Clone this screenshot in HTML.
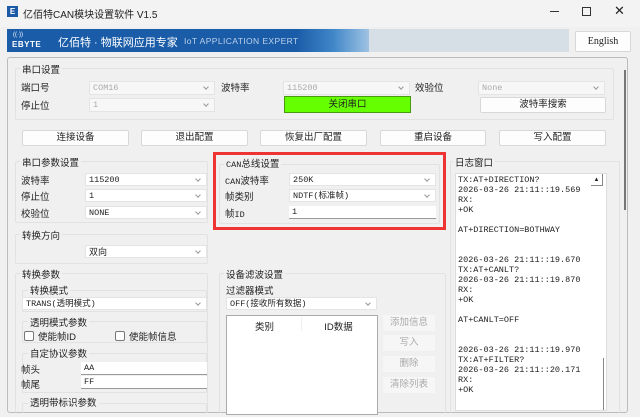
<!DOCTYPE html>
<html><head><meta charset="utf-8"><style>
*{box-sizing:border-box;margin:0;padding:0}
body{width:640px;height:417px;background:#f0f0f0;font-family:"Liberation Sans","Noto Sans CJK SC",sans-serif;font-size:9.5px;color:#222;position:relative;overflow:hidden}
.a{position:absolute;white-space:nowrap}
.m{font-family:"Liberation Mono","Noto Sans CJK SC",monospace;font-size:8.5px}
.cb{position:absolute;background:#fff;border:1px solid #e4e4e4;font-family:"Liberation Mono","Noto Sans CJK SC",monospace;font-size:8.5px;padding-left:3px;line-height:12px;white-space:nowrap}
.cb.d{background:#f7f7f7;color:#aaa}
.cb:after{content:"";position:absolute;right:6px;top:3px;width:3px;height:3px;border-right:1px solid #999;border-bottom:1px solid #999;transform:rotate(45deg)}
.ed{position:absolute;background:#fff;border-bottom:1px solid #999;font-family:"Liberation Mono",monospace;font-size:8.5px;padding-left:3px;line-height:12px}
.bt{position:absolute;background:#fdfdfd;border:1px solid #d8d8d8;border-radius:2px;text-align:center;line-height:14px;font-size:9.5px}
.gb{position:absolute;border:1px solid #e2e2e2;border-radius:2px}
.gt{position:absolute;background:#f0f0f0;padding:0 2px;font-size:9.5px}
.dis{position:absolute;background:#f6f6f6;color:#aaa;text-align:center;line-height:16px;font-size:9.5px}
.ck{display:inline-block;width:10px;height:10px;border:1px solid #777;border-radius:2px;vertical-align:-1px;margin-right:4px;background:#fff}
</style></head><body>
<!-- title bar -->
<div class="a" style="left:0;top:0;width:640px;height:27px;background:#f3f3f3"></div>
<div class="a" style="left:7px;top:6px;width:11px;height:11px;background:#1c5aa6;color:#fff;font-size:8px;line-height:11px;text-align:center;font-weight:bold">E</div>
<div class="a" style="left:23px;top:6px;font-size:10px">亿佰特CAN模块设置软件 V1.5</div>
<div class="a" style="left:550px;top:11px;width:9px;height:1px;background:#333"></div>
<div class="a" style="left:582px;top:7px;width:9px;height:9px;border:1px solid #333"></div>
<div class="a" style="left:614px;top:3px;font-size:13px">✕</div>
<!-- banner -->
<div class="a" style="left:7px;top:29px;width:562px;height:23px;background:#d6dee6"></div>
<div class="a" style="left:7px;top:29px;width:362px;height:23px;background:linear-gradient(90deg,#1b5ca8 0%,#1b5ca8 80%,#3f86c8 90%,#9fc3e3 100%)"></div>
<div class="a" style="left:13px;top:32px;color:#fff;font-size:6px">((·))</div>
<div class="a" style="left:12px;top:40px;color:#fff;font-size:8px;font-weight:bold;letter-spacing:0.5px">EBYTE</div>
<div class="a" style="left:58px;top:34px;color:#fff;font-size:11px">亿佰特 · 物联网应用专家</div>
<div class="a" style="left:184px;top:36px;color:#bcd2ea;font-size:8.5px;letter-spacing:0.4px">IoT APPLICATION EXPERT</div>
<div class="bt" style="left:575px;top:31px;width:56px;height:21px;line-height:19px;font-family:'Liberation Serif',serif;font-size:10px">English</div>
<!-- main panel -->
<div class="a" style="left:7px;top:57px;width:621px;height:356px;border:1px solid #bbb;border-radius:3px"></div>
<div class="a" style="left:624px;top:70px;width:2px;height:140px;background:#777"></div>
<!-- 串口设置 -->
<div class="gb" style="left:15px;top:68px;width:599px;height:52px"></div>
<div class="gt" style="left:20px;top:62px">串口设置</div>
<div class="a" style="left:21px;top:80px">端口号</div>
<div class="a" style="left:21px;top:98px">停止位</div>
<div class="cb d" style="left:89px;top:81px;width:126px;height:14px">COM16</div>
<div class="cb d" style="left:89px;top:98px;width:126px;height:14px">1</div>
<div class="a" style="left:221px;top:80px">波特率</div>
<div class="cb d" style="left:283px;top:81px;width:127px;height:14px">115200</div>
<div class="a" style="left:415px;top:80px">效验位</div>
<div class="cb d" style="left:478px;top:81px;width:127px;height:14px">None</div>
<div class="a" style="left:284px;top:96px;width:127px;height:17px;background:#66ff00;border:1px solid #4a9a10;text-align:center;line-height:15px">关闭串口</div>
<div class="bt" style="left:480px;top:97px;width:126px;height:16px">波特率搜索</div>
<!-- buttons row -->
<div class="bt" style="left:22px;top:130px;width:107px;height:16px">连接设备</div>
<div class="bt" style="left:141px;top:130px;width:107px;height:16px">退出配置</div>
<div class="bt" style="left:260px;top:130px;width:107px;height:16px">恢复出厂配置</div>
<div class="bt" style="left:380px;top:130px;width:106px;height:16px">重启设备</div>
<div class="bt" style="left:499px;top:130px;width:107px;height:16px">写入配置</div>
<!-- 串口参数设置 -->
<div class="gb" style="left:15px;top:161px;width:193px;height:62px"></div>
<div class="gt" style="left:20px;top:155px">串口参数设置</div>
<div class="a" style="left:21px;top:173px">波特率</div>
<div class="a" style="left:21px;top:189px">停止位</div>
<div class="a" style="left:21px;top:206px">校验位</div>
<div class="cb" style="left:85px;top:173px;width:122px;height:13px">115200</div>
<div class="cb" style="left:85px;top:189px;width:122px;height:13px">1</div>
<div class="cb" style="left:85px;top:206px;width:122px;height:13px">NONE</div>
<div class="gb" style="left:15px;top:234px;width:193px;height:30px"></div>
<div class="gt" style="left:20px;top:228px">转换方向</div>
<div class="cb" style="left:85px;top:245px;width:122px;height:13px;font-family:'Noto Sans CJK SC',sans-serif;font-size:9px">双向</div>
<!-- 转换参数 -->
<div class="gb" style="left:15px;top:273px;width:193px;height:140px;border-bottom:none"></div>
<div class="gt" style="left:20px;top:267px">转换参数</div>
<div class="gb" style="left:22px;top:290px;width:185px;height:22px"></div>
<div class="gt" style="left:28px;top:283px">转换模式</div>
<div class="cb" style="left:22px;top:297px;width:185px;height:13px">TRANS(透明模式)</div>
<div class="gb" style="left:22px;top:321px;width:185px;height:22px"></div>
<div class="gt" style="left:28px;top:315px">透明模式参数</div>
<div class="a" style="left:24px;top:329px"><span class="ck"></span>使能帧ID</div>
<div class="a" style="left:115px;top:329px"><span class="ck"></span>使能帧信息</div>
<div class="gb" style="left:22px;top:353px;width:185px;height:40px"></div>
<div class="gt" style="left:28px;top:346px">自定协议参数</div>
<div class="a" style="left:21px;top:362px">帧头</div>
<div class="a" style="left:21px;top:377px">帧尾</div>
<div class="ed" style="left:81px;top:362px;width:126px;height:13px">AA</div>
<div class="ed" style="left:81px;top:376px;width:126px;height:13px">FF</div>
<div class="gb" style="left:22px;top:403px;width:185px;height:10px;border-bottom:none"></div>
<div class="gt" style="left:28px;top:395px">透明带标识参数</div>
<!-- CAN -->
<div class="a" style="left:213px;top:152px;width:233px;height:78px;border:3px solid #ee3333"></div>
<div class="gb" style="left:219px;top:164px;width:221px;height:60px"></div>
<div class="gt" style="left:224px;top:156px"><span class="m">CAN</span>总线设置</div>
<div class="a" style="left:225px;top:173px"><span class="m">CAN</span>波特率</div>
<div class="a" style="left:225px;top:189px">帧类别</div>
<div class="a" style="left:225px;top:206px">帧<span class="m">ID</span></div>
<div class="cb" style="left:289px;top:173px;width:147px;height:13px">250K</div>
<div class="cb" style="left:289px;top:189px;width:147px;height:13px">NDTF(标准帧)</div>
<div class="ed" style="left:289px;top:206px;width:147px;height:13px">1</div>
<!-- 设备滤波设置 -->
<div class="gb" style="left:219px;top:273px;width:227px;height:140px;border-bottom:none"></div>
<div class="gt" style="left:224px;top:267px">设备滤波设置</div>
<div class="a" style="left:226px;top:283px">过滤器模式</div>
<div class="cb" style="left:226px;top:297px;width:151px;height:13px">OFF(接收所有数据)</div>
<div class="a" style="left:226px;top:315px;width:152px;height:100px;background:#fff;border:1px solid #aaa"></div>
<div class="a" style="left:228px;top:319px;width:73px;text-align:center">类别</div>
<div class="a" style="left:301px;top:317px;width:1px;height:14px;background:#eee"></div>
<div class="a" style="left:302px;top:319px;width:73px;text-align:center">ID数据</div>
<div class="dis" style="left:383px;top:315px;width:52px;height:16px">添加信息</div>
<div class="dis" style="left:383px;top:335px;width:52px;height:16px">写入</div>
<div class="dis" style="left:383px;top:356px;width:52px;height:16px">删除</div>
<div class="dis" style="left:383px;top:377px;width:52px;height:16px">清除列表</div>
<!-- log -->
<div class="gb" style="left:450px;top:161px;width:170px;height:252px;border-bottom:none"></div>
<div class="gt" style="left:453px;top:155px">日志窗口</div>
<div class="a" style="left:455px;top:173px;width:152px;height:238px;background:#fff;border:1px solid #ddd"></div>
<div class="a" style="left:591px;top:174px;width:12px;height:12px;border-right:1px solid #888;border-bottom:1px solid #888;font-size:6px;text-align:center;line-height:12px">▲</div>
<div class="a" style="left:603px;top:358px;width:1px;height:52px;background:#888"></div>
<div class="a m" style="left:458px;top:175px;line-height:10px">TX:AT+DIRECTION?<br>2026-03-26 21:11::19.569<br>RX:<br>+OK<br><br>AT+DIRECTION=BOTHWAY<br><br><br>2026-03-26 21:11::19.670<br>TX:AT+CANLT?<br>2026-03-26 21:11::19.870<br>RX:<br>+OK<br><br>AT+CANLT=OFF<br><br><br>2026-03-26 21:11::19.970<br>TX:AT+FILTER?<br>2026-03-26 21:11::20.171<br>RX:<br>+OK</div>
</body></html>
